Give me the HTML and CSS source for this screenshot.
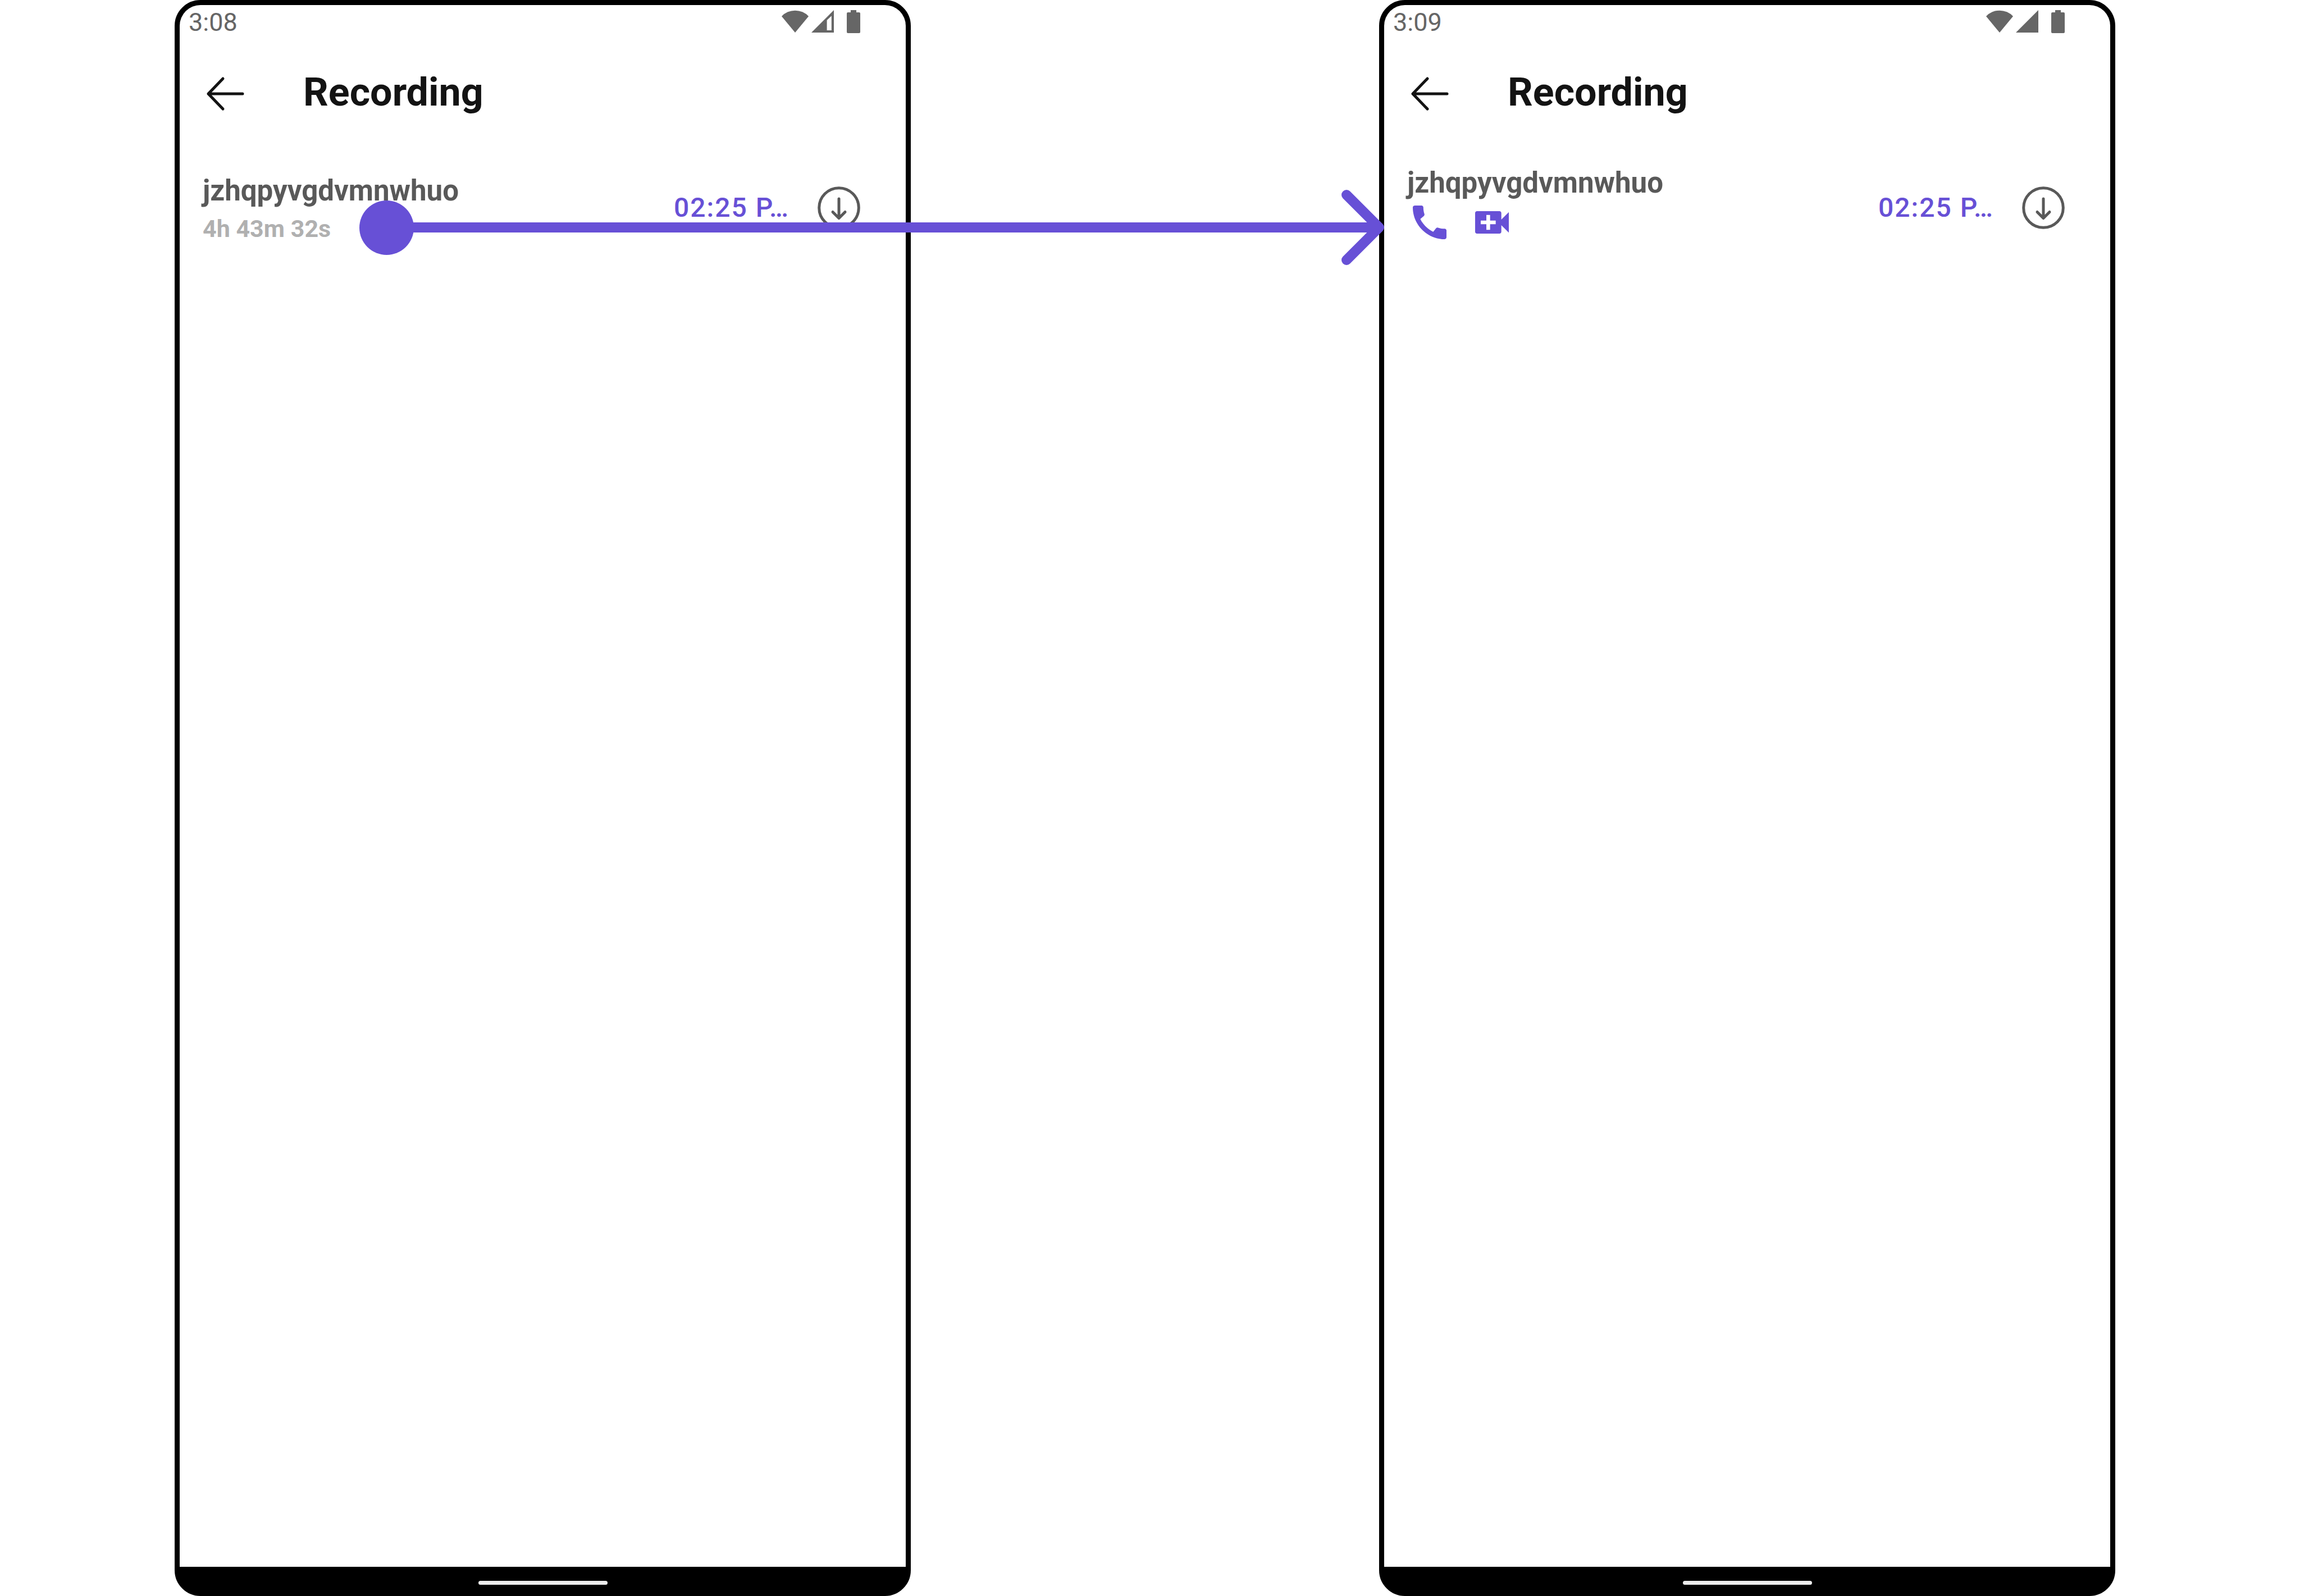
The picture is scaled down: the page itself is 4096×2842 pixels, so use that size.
FILE: index.html
```html
<!DOCTYPE html>
<html lang="en">
<head>
<meta charset="utf-8">
<title>Recording</title>
<link rel="stylesheet" href="styles.css">
</head>
<body>
<div class="board">
  <section class="phone phone-first" aria-label="Recording duration">
    <div class="screen">
      <div class="status">
        <span class="clock">3:08</span>
        <div class="status-icons">
          <svg class="wifi" viewBox="0 0 48 40"><path d="M0 11A33 33 0 0 1 48 11L24 40Z"/></svg>
          <svg class="signal" viewBox="0 0 40 40"><path fill-rule="evenodd" d="M0 40L40 0V40ZM27.6 18V36H35.8V10.3Z"/></svg>
          <svg class="battery" viewBox="0 0 24 41"><path d="M7 0H17V4H22Q24 4 24 6V39Q24 41 22 41H2Q0 41 0 39V6Q0 4 2 4H7Z"/></svg>
        </div>
      </div>
      <header class="header">
        <button class="back" type="button" aria-label="Back"><svg viewBox="0 0 80 84"><path d="M37 18L11 45L37 72M11 45H72"/></svg></button>
        <h1 class="title">Recording</h1>
      </header>
      <main class="content">
        <article class="row">
          <div class="info info-duration">
            <h2 class="name">jzhqpyvgdvmnwhuo</h2>
            <p class="duration">4h 43m 32s</p>
          </div>
          <div class="actions">
            <button class="time" type="button">02:25 P…</button>
            <button class="download" type="button" aria-label="Download"><svg viewBox="0 0 76 76"><circle cx="38" cy="38" r="35.3"/><path d="M38 22V56M27 45.5L38 56.5L49 45.5"/></svg></button>
          </div>
        </article>
      </main>
    </div>
    <footer class="nav"><span class="handle"></span></footer>
  </section>

  <section class="phone phone-second" aria-label="Recording calls">
    <div class="screen">
      <div class="status">
        <span class="clock">3:09</span>
        <div class="status-icons">
          <svg class="wifi" viewBox="0 0 48 40"><path d="M0 11A33 33 0 0 1 48 11L24 40Z"/></svg>
          <svg class="signal" viewBox="0 0 40 40"><path d="M0 40L40 0V40Z"/></svg>
          <svg class="battery" viewBox="0 0 24 41"><path d="M7 0H17V4H22Q24 4 24 6V39Q24 41 22 41H2Q0 41 0 39V6Q0 4 2 4H7Z"/></svg>
        </div>
      </div>
      <header class="header">
        <button class="back" type="button" aria-label="Back"><svg viewBox="0 0 80 84"><path d="M37 18L11 45L37 72M11 45H72"/></svg></button>
        <h1 class="title">Recording</h1>
      </header>
      <main class="content">
        <article class="row">
          <div class="info">
            <h2 class="name">jzhqpyvgdvmnwhuo</h2>
            <div class="calls">
              <button class="call" type="button" aria-label="Voice call"><svg viewBox="0 0 24 24"><path d="M20.01 15.38c-1.23 0-2.42-.2-3.53-.56-.35-.12-.74-.03-1.01.24l-1.57 1.97c-2.83-1.35-5.48-3.9-6.89-6.83l1.95-1.66c.27-.28.35-.67.24-1.02-.37-1.11-.56-2.3-.56-3.53 0-.54-.45-.99-.99-.99H4.19C3.65 3 3 3.24 3 3.99 3 13.28 10.73 21 20.01 21c.71 0 .99-.63.99-1.18v-3.45c0-.54-.45-.99-.99-.99z"/></svg></button>
              <button class="call" type="button" aria-label="Video call"><svg viewBox="0 0 24 24"><path d="M17 10.5V7c0-.55-.45-1-1-1H4c-.55 0-1 .45-1 1v10c0 .55.45 1 1 1h12c.55 0 1-.45 1-1v-3.5l4 4v-11l-4 4zM14 13h-3v3H9v-3H6v-2h3V8h2v3h3v2z"/></svg></button>
            </div>
          </div>
          <div class="actions">
            <button class="time" type="button">02:25 P…</button>
            <button class="download" type="button" aria-label="Download"><svg viewBox="0 0 76 76"><circle cx="38" cy="38" r="35.3"/><path d="M38 22V56M27 45.5L38 56.5L49 45.5"/></svg></button>
          </div>
        </article>
      </main>
    </div>
    <footer class="nav"><span class="handle"></span></footer>
  </section>

  <div class="connector" aria-hidden="true">
    <span class="dot"></span>
    <span class="line"></span>
    <svg class="head" viewBox="0 0 76 136"><path d="M9 10L67 68L9 126M0 68H67"/></svg>
  </div>
</div>
</body>
</html>
```
FILE: styles.css
```css
* {
  box-sizing: border-box;
}

body {
  margin: 0;
  background: #fff;
  font-family: Roboto, "Liberation Sans", sans-serif;
}

h1, h2, p {
  margin: 0;
}

button {
  padding: 0;
  border: 0;
  background: none;
  font-family: inherit;
}

svg {
  display: block;
}

.board {
  display: grid;
  grid-template-columns: 311fr 1311fr 834fr 1311fr 329fr;
  min-height: 100vh;
}

.phone {
  display: flex;
  flex-direction: column;
  grid-row: 1;
  border: 9px solid #000;
  border-radius: 46px;
  background: #000;
}

.phone-first {
  grid-column: 2;
}

.phone-second {
  grid-column: 4;
}

.screen {
  flex: 1;
  border-radius: 37px 37px 0 0;
  background: #fff;
}

/* Status bar */
.status {
  display: flex;
  justify-content: space-between;
  height: 57px;
  padding: 5px 81px 0 16px;
  color: #666;
}

.clock {
  font-size: 45px;
  line-height: 52px;
}

.status-icons {
  display: flex;
  padding-top: 4px;
  fill: #666;
}

.wifi {
  width: 48px;
  height: 40px;
}

.signal {
  width: 40px;
  height: 40px;
  margin-left: 5px;
}

.battery {
  width: 24px;
  height: 41px;
  margin-left: 23px;
}

/* Title bar */
.header {
  display: flex;
  align-items: center;
  gap: 100px;
  padding: 56px 40px 0;
}

.back svg {
  width: 80px;
  height: 84px;
  fill: none;
  stroke: #131313;
  stroke-width: 5;
  stroke-linecap: round;
  stroke-linejoin: round;
}

.title {
  color: #131313;
  font-size: 70px;
  font-weight: 700;
  line-height: 82px;
}

/* Recording list */
.content {
  padding: 90px 81px 0 41px;
}

.row {
  display: flex;
  align-items: center;
  justify-content: space-between;
  min-height: 147px;
}

.info {
  align-self: flex-start;
}

.info-duration {
  padding-top: 14px;
}

.name {
  color: #595959;
  font-size: 51px;
  font-weight: 700;
  line-height: 60px;
}

.duration {
  padding-top: 12px;
  color: #b0b0b0;
  font-size: 43px;
  font-weight: 700;
  line-height: 50px;
}

.calls {
  display: flex;
  gap: 31px;
}

.call svg {
  width: 80px;
  height: 80px;
  fill: #6750d6;
}

.actions {
  display: flex;
  align-items: center;
  gap: 50px;
}

.time {
  color: #6750d6;
  font-size: 48px;
  font-weight: 500;
  letter-spacing: 2px;
  line-height: 56px;
}

.download svg {
  width: 76px;
  height: 76px;
  fill: none;
  stroke: #595959;
  stroke-width: 5;
  stroke-linecap: round;
  stroke-linejoin: round;
}

/* System navigation */
.nav {
  display: flex;
  justify-content: center;
  height: 43px;
  padding-top: 25px;
}

.handle {
  width: 230px;
  height: 7px;
  border-radius: 4px;
  background: #ebebeb;
}

/* Arrow between the two screens */
.connector {
  z-index: 1;
  display: flex;
  grid-column: 2 / 4;
  grid-row: 1;
  align-items: center;
  align-self: start;
  margin: 337px -9px 0 329px;
}

.dot {
  width: 97px;
  height: 97px;
  border-radius: 50%;
  background: #6750d6;
}

.line {
  flex: 1;
  height: 18px;
  margin-left: -9px;
  background: #6750d6;
}

.head {
  width: 76px;
  height: 136px;
  fill: none;
  stroke: #6750d6;
  stroke-width: 18;
  stroke-linecap: round;
  stroke-linejoin: round;
}
```
